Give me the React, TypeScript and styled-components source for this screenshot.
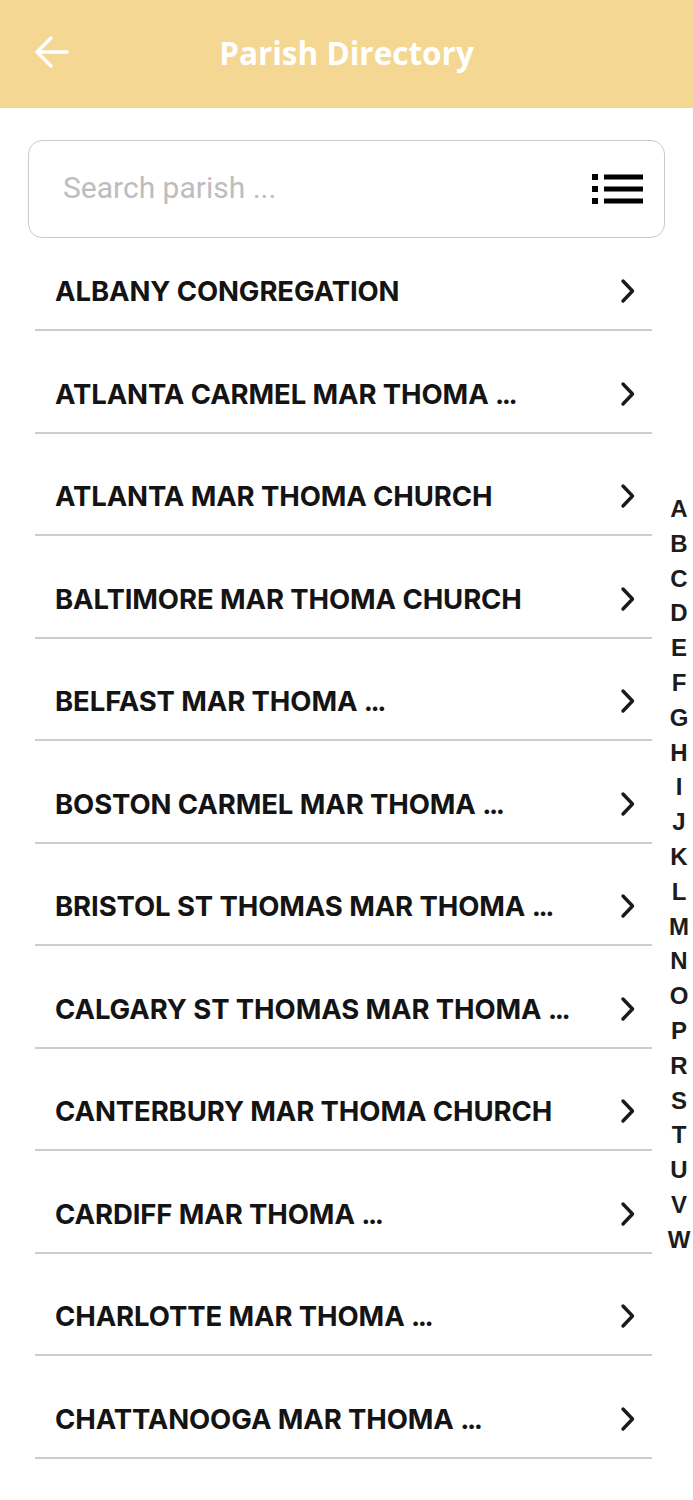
import React from "react";
import styled, { createGlobalStyle } from "styled-components";

const GlobalStyle = createGlobalStyle`
  html, body { margin: 0; padding: 0; background: #ffffff; }
  body { font-family: "Inter", "Liberation Sans", sans-serif; }
  * { box-sizing: border-box; }
`;

const Page = styled.div`
  position: relative;
  width: 693px;
  min-height: 1500px;
  background: #ffffff;
  overflow: hidden;
`;

const Header = styled.header`
  position: relative;
  height: 108px;
  background: #f5d794;
  display: flex;
  align-items: center;
  justify-content: center;
`;

const BackButton = styled.button`
  position: absolute;
  left: 30px;
  top: 31px;
  width: 44px;
  height: 44px;
  padding: 0;
  border: none;
  background: transparent;
  display: flex;
  align-items: center;
  justify-content: center;
`;

const Title = styled.h1`
  margin: 0;
  margin-top: -4px;
  font-family: "Open Sans", sans-serif;
  font-weight: 700;
  font-size: 31.5px;
  color: #ffffff;
  letter-spacing: 0;
`;

const SearchBox = styled.div`
  margin: 32px 28px 0 28px;
  height: 98px;
  border: 1.5px solid #cbcbcb;
  border-radius: 14px;
  display: flex;
  align-items: center;
  padding: 0 20px 0 34px;
`;

const SearchInput = styled.input`
  flex: 1;
  border: none;
  outline: none;
  background: transparent;
  font-family: "Roboto", sans-serif;
  font-size: 30px;
  color: #333;
  padding: 0;
  margin-top: -4px;
  &::placeholder {
    color: #bdbdbd;
  }
`;

const List = styled.ul`
  list-style: none;
  margin: 0 41px 0 35px;
  padding: 0;
`;

const Row = styled.li`
  display: flex;
  align-items: center;
  justify-content: space-between;
  padding: 35px 16px 20px 20px;
  border-bottom: 2px solid #cdcdcd;
  margin-bottom: 9.5px;
`;

const RowLabel = styled.span`
  font-family: "Inter", sans-serif;
  font-weight: 700;
  font-size: 27.5px;
  line-height: 36px;
  letter-spacing: -0.1px;
  color: #141414;
  white-space: nowrap;
`;

const Dots = styled.span`
  letter-spacing: -2.4px;
`;

const AlphaIndex = styled.div`
  position: absolute;
  right: 0;
  top: 492px;
  width: 28px;
  display: flex;
  flex-direction: column;
  align-items: center;
`;

const AlphaLetter = styled.span`
  font-family: "Liberation Sans", Arial, sans-serif;
  font-weight: 700;
  font-size: 24px;
  line-height: 34.8px;
  color: #1c1c1c;
`;

const parishes = [
  "ALBANY CONGREGATION",
  "ATLANTA CARMEL MAR THOMA ...",
  "ATLANTA MAR THOMA CHURCH",
  "BALTIMORE MAR THOMA CHURCH",
  "BELFAST MAR THOMA ...",
  "BOSTON CARMEL MAR THOMA ...",
  "BRISTOL ST THOMAS MAR THOMA ...",
  "CALGARY ST THOMAS MAR THOMA ...",
  "CANTERBURY MAR THOMA CHURCH",
  "CARDIFF MAR THOMA ...",
  "CHARLOTTE MAR THOMA ...",
  "CHATTANOOGA MAR THOMA ...",
];

const letters = "ABCDEFGHIJKLMNOPRSTUVW".split("");

const ArrowLeft = () => (
  <svg width="44" height="44" viewBox="0 0 44 44" fill="none">
    <path
      d="M7 21 H37 M7 21 L21 7 M7 21 L21 35"
      stroke="#ffffff"
      strokeWidth="3.4"
      strokeLinecap="round"
      strokeLinejoin="round"
    />
  </svg>
);

const ListIcon = () => (
  <svg width="52" height="32" viewBox="0 0 52 32" fill="#000">
    <rect x="0" y="1" width="6" height="6" />
    <rect x="12" y="1.5" width="39" height="5" />
    <rect x="0" y="13" width="6" height="6" />
    <rect x="12" y="13.5" width="39" height="5" />
    <rect x="0" y="25" width="6" height="6" />
    <rect x="12" y="25.5" width="39" height="5" />
  </svg>
);

const Chevron = () => (
  <svg width="16" height="26" viewBox="0 0 16 26" fill="none">
    <path
      d="M3 3 L12.5 13 L3 23"
      stroke="#1a1a1a"
      strokeWidth="3.4"
      strokeLinecap="round"
      strokeLinejoin="round"
    />
  </svg>
);

const renderLabel = (name: string) => {
  if (name.endsWith("...")) {
    return (
      <>
        {name.slice(0, -3)}
        <Dots>...</Dots>
      </>
    );
  }
  return name;
};

export default function App() {
  return (
    <>
      <GlobalStyle />
      <Page>
        <Header>
          <BackButton aria-label="Back">
            <ArrowLeft />
          </BackButton>
          <Title>Parish Directory</Title>
        </Header>
        <SearchBox>
          <SearchInput placeholder="Search parish ..." />
          <ListIcon />
        </SearchBox>
        <List>
          {parishes.map((p) => (
            <Row key={p}>
              <RowLabel>{renderLabel(p)}</RowLabel>
              <Chevron />
            </Row>
          ))}
        </List>
        <AlphaIndex>
          {letters.map((l) => (
            <AlphaLetter key={l}>{l}</AlphaLetter>
          ))}
        </AlphaIndex>
      </Page>
    </>
  );
}
